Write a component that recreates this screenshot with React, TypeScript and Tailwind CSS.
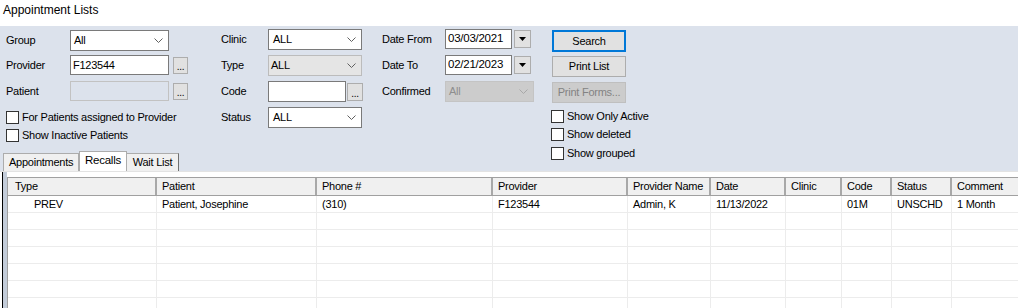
import React from "react";

const FONT = "font-['Liberation_Sans',Arial,sans-serif]";

function Chevron({ color = "#606060" }: { color?: string }) {
  return (
    <svg width="9" height="5" viewBox="0 0 9 5" className="shrink-0">
      <path d="M0.5 0.5 L4.5 4.5 L8.5 0.5" fill="none" stroke={color} strokeWidth="1" />
    </svg>
  );
}

function Select({
  w,
  h = "h-[21px]",
  text,
  variant = "normal",
  pl = "pl-[4px]",
}: {
  w: string;
  h?: string;
  text: string;
  variant?: "normal" | "disabledLight" | "disabledDark";
  pl?: string;
}) {
  const cls =
    variant === "normal"
      ? "bg-white border-[#7a7a7a] text-black"
      : variant === "disabledLight"
      ? "bg-[#e5e5e5] border-[#bcbcbc] text-black"
      : "bg-[#cccccc] border-[#c4c4c4] text-[#8e8e8e]";
  const chev = variant === "disabledDark" ? "#a8a8a8" : "#606060";
  return (
    <div className={`${w} ${h} ${cls} ${pl} border flex items-center justify-between pr-[5px] shrink-0`}>
      <span>{text}</span>
      <Chevron color={chev} />
    </div>
  );
}

function DotsButton({ w = "w-[15px]", h = "h-[17px]" }: { w?: string; h?: string }) {
  return (
    <div className={`${w} ${h} bg-[#e1e1e1] border border-[#adadad] flex items-end justify-center pb-[1px] text-[10px] leading-[10px] text-black`}>
      ...
    </div>
  );
}

function DateButton() {
  return (
    <div className="w-[17px] h-[18px] bg-[#e1e1e1] border border-[#adadad] flex items-center justify-center">
      <svg width="7" height="4" viewBox="0 0 7 4">
        <path d="M0 0 L7 0 L3.5 4 Z" fill="#000" />
      </svg>
    </div>
  );
}

function CheckBox({ label, mt }: { label: string; mt: string }) {
  return (
    <div className={`flex items-center h-[13px] shrink-0 ${mt}`}>
      <div className="w-[13px] h-[13px] border border-[#333333] bg-white shrink-0" />
      <span className="ml-[3px] whitespace-nowrap">{label}</span>
    </div>
  );
}

const columns = [
  { name: "Type", w: 149 },
  { name: "Patient", w: 160 },
  { name: "Phone #", w: 176 },
  { name: "Provider", w: 135 },
  { name: "Provider Name", w: 83 },
  { name: "Date", w: 75 },
  { name: "Clinic", w: 56 },
  { name: "Code", w: 50 },
  { name: "Status", w: 60 },
  { name: "Comment", w: 80 },
];

const row = ["PREV", "Patient, Josephine", "(310)", "F123544", "Admin, K", "11/13/2022", "", "01M", "UNSCHD", "1 Month"];

export default function App() {
  return (
    <div className={`${FONT} w-[1018px] h-[308px] overflow-hidden bg-white text-[11px] tracking-[-0.25px] text-black flex flex-col`}>
      {/* Title */}
      <div className="h-[26px] pl-[3px] pt-[3px] text-[12px] leading-[14px] tracking-normal shrink-0">Appointment Lists</div>

      {/* Panel */}
      <div className="h-[145px] bg-[#dce2ec] shrink-0 flex flex-col">
        <div className="flex pt-[3px] h-[125px] shrink-0">
          {/* Column 1 */}
          <div className="flex flex-col pl-[6px] w-[221px] shrink-0">
            <div className="flex items-center h-[21px] mt-[1px] shrink-0">
              <span className="w-[64px]">Group</span>
              <Select w="w-[99px]" text="All" pl="pl-[3px]" />
            </div>
            <div className="flex items-center h-[20px] mt-[4px] shrink-0">
              <span className="w-[64px]">Provider</span>
              <div className="w-[99px] h-[20px] bg-white border border-[#7a7a7a] pl-[2px] flex items-center">F123544</div>
              <div className="ml-[4px]">
                <DotsButton />
              </div>
            </div>
            <div className="flex items-center h-[20px] mt-[6px] shrink-0">
              <span className="w-[64px]">Patient</span>
              <div className="w-[99px] h-[20px] bg-[#dce2ec] border border-[#c2c2c2]" />
              <div className="ml-[4px]">
                <DotsButton />
              </div>
            </div>
            <CheckBox label="For Patients assigned to Provider" mt="mt-[10px]" />
            <CheckBox label="Show Inactive Patients" mt="mt-[5px]" />
          </div>

          {/* Column 2 */}
          <div className="flex flex-col w-[161px] shrink-0">
            <div className="flex items-center h-[21px] shrink-0">
              <span className="w-[47px]">Clinic</span>
              <Select w="w-[94px]" text="ALL" />
            </div>
            <div className="flex items-center h-[21px] mt-[5px] shrink-0">
              <span className="w-[47px]">Type</span>
              <Select w="w-[94px]" text="ALL" variant="disabledLight" pl="pl-[2px]" />
            </div>
            <div className="flex items-center h-[21px] mt-[5px] shrink-0">
              <span className="w-[47px]">Code</span>
              <div className="w-[78px] h-[21px] bg-white border border-[#7a7a7a]" />
              <div className="ml-[1px]">
                <DotsButton w="w-[16px]" h="h-[18px]" />
              </div>
            </div>
            <div className="flex items-center h-[21px] mt-[5px] shrink-0">
              <span className="w-[47px]">Status</span>
              <Select w="w-[94px]" text="ALL" />
            </div>
          </div>

          {/* Column 3 */}
          <div className="flex flex-col w-[169px] shrink-0">
            <div className="flex items-center h-[20px] shrink-0">
              <span className="w-[63px]">Date From</span>
              <div className="w-[67px] h-[20px] bg-white border border-[#7a7a7a] pl-[2px] flex items-center text-[11.5px]">03/03/2021</div>
              <div className="ml-[2px]">
                <DateButton />
              </div>
            </div>
            <div className="flex items-center h-[20px] mt-[6px] shrink-0">
              <span className="w-[63px]">Date To</span>
              <div className="w-[67px] h-[20px] bg-white border border-[#7a7a7a] pl-[2px] flex items-center text-[11.5px]">02/21/2023</div>
              <div className="ml-[2px]">
                <DateButton />
              </div>
            </div>
            <div className="flex items-center h-[21px] mt-[6px] shrink-0">
              <span className="w-[63px]">Confirmed</span>
              <Select w="w-[89px]" text="All" variant="disabledDark" pl="pl-[3px]" />
            </div>
          </div>

          {/* Column 4 */}
          <div className="flex flex-col shrink-0">
            <div className="ml-[1px] mt-[1px] w-[74px] h-[22px] shrink-0 bg-[#e1e1e1] border-2 border-[#0078d7] flex items-center justify-center">Search</div>
            <div className="ml-[1px] mt-[4px] w-[74px] h-[21px] shrink-0 bg-[#e1e1e1] border border-[#adadad] flex items-center justify-center">Print List</div>
            <div className="ml-[1px] mt-[5px] w-[74px] h-[21px] shrink-0 bg-[#cccccc] border border-[#bfbfbf] text-[#838383] flex items-center justify-center">Print Forms...</div>
            <CheckBox label="Show Only Active" mt="mt-[7px]" />
            <CheckBox label="Show deleted" mt="mt-[5px]" />
            <CheckBox label="Show grouped" mt="mt-[6px]" />
          </div>
        </div>

        {/* Tabs */}
        <div className="flex items-end h-[20px] pl-[3px] shrink-0">
          <div className="w-[76px] h-[18px] bg-[#f0f0f0] border border-b-0 border-[#acacac] flex items-center pl-[5px] shrink-0">Appointments</div>
          <div className="w-[48px] h-[20px] bg-white border border-b-0 border-[#acacac] flex items-center justify-center pb-[1px] text-[11.5px] shrink-0">Recalls</div>
          <div className="w-[52px] h-[18px] bg-[#f0f0f0] border border-b-0 border-l-0 border-[#707070] border-t-[#acacac] flex items-center justify-center shrink-0">Wait List</div>
        </div>
      </div>

      {/* Tab page */}
      <div className="flex-1 bg-white border-t border-[#e3e3e3] flex">
        <div className="ml-[2px] w-[1px] bg-black" />
        <div className="w-[4px] bg-[#c3ccd9]" />
        <div className="flex-1 pt-[5px] overflow-hidden">
          <div className="border-t border-l border-[#a0a0a0]">
            {/* header */}
            <div className="flex h-[18px] bg-[#f0f0f0] border-b border-[#a0a0a0]">
              {columns.map((c, i) => (
                <div
                  key={c.name}
                  style={{ width: c.w }}
                  className={`shrink-0 flex items-center whitespace-nowrap ${i === 0 ? "pl-[7px]" : "pl-[5px]"} ${i < columns.length - 1 ? "border-r-2 border-[#a8a8a8]" : ""}`}
                >
                  {c.name}
                </div>
              ))}
            </div>
            {/* rows */}
            {Array.from({ length: 7 }).map((_, r) => (
              <div key={r} className="flex h-[17px] border-b border-[#ececec]">
                {columns.map((c, i) => (
                  <div
                    key={c.name}
                    style={{ width: c.w }}
                    className={`shrink-0 flex items-center whitespace-nowrap ${i === 0 ? "pl-[26px]" : "pl-[5px]"} ${i < columns.length - 1 ? "border-r border-[#ececec]" : ""}`}
                  >
                    {r === 0 ? row[i] : ""}
                  </div>
                ))}
              </div>
            ))}
          </div>
        </div>
      </div>
    </div>
  );
}
